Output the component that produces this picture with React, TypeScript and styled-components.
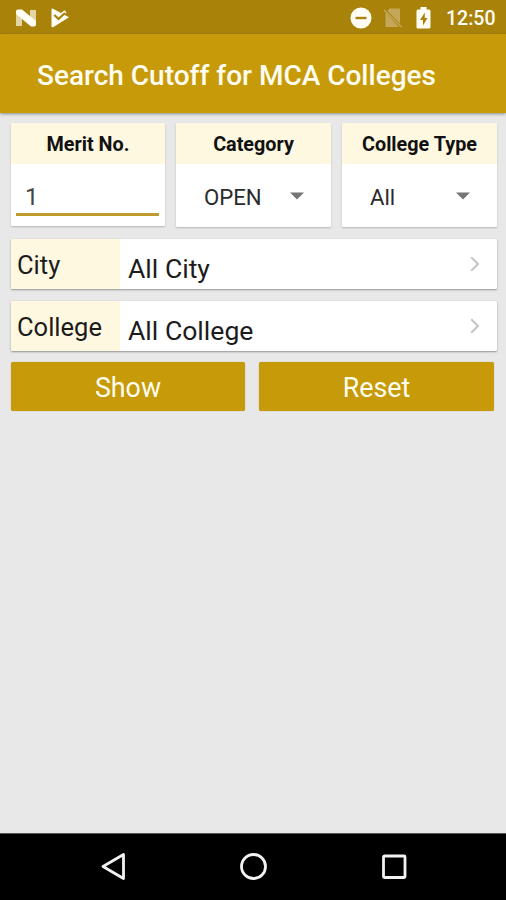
import React from "react";
import styled, { createGlobalStyle } from "styled-components";

const GOLD = "#c79a09";
const CREAM = "#fff8e1";

const GlobalStyle = createGlobalStyle`
  *, *::before, *::after { box-sizing: border-box; }
  body { margin: 0; background: #e8e8e8; }
  button, input { font: inherit; }
`;

const Screen = styled.div`
  width: 506px;
  height: 900px;
  display: flex;
  flex-direction: column;
  overflow: hidden;
  background: #e8e8e8;
  color: #1c1c1c;
  font-family: Roboto, "Liberation Sans", sans-serif;
`;

const StatusBar = styled.header`
  flex: none;
  height: 34px;
  display: flex;
  align-items: center;
  justify-content: space-between;
  padding: 0 11px 0 16px;
  background: #a9820a;
  color: #fffdf5;
`;

const StatusGroup = styled.div<{ $gap: number }>`
  display: flex;
  align-items: center;
  gap: ${(p) => p.$gap}px;
  height: 34px;
  padding-top: 1px;
`;

const Clock = styled.time`
  margin-left: 3px;
  width: 49px;
  font-size: 19.5px;
  font-weight: 500;
  line-height: 34px;
  padding-top: 2px;
  white-space: nowrap;
`;

const AppBar = styled.div`
  flex: none;
  height: 79px;
  padding-left: 37px;
  background: ${GOLD};
  box-shadow: 0 1px 3px rgba(0, 0, 0, 0.4);
`;

const Title = styled.h1`
  margin: 0;
  color: #fffdf0;
  font-size: 28px;
  font-weight: 500;
  line-height: 83px;
  white-space: nowrap;
`;

const Form = styled.main`
  flex: 1;
  padding: 10px 9px 0 11px;
`;

const Filters = styled.section`
  display: grid;
  grid-template-columns: 154px 155px 155px;
  column-gap: 11px;
  align-items: start;
  height: 116px;
`;

const Card = styled.div<{ $height: number }>`
  height: ${(p) => p.$height}px;
  background: #fff;
  border-radius: 1px;
  overflow: hidden;
  box-shadow: 0 1px 2px rgba(0, 0, 0, 0.22);
`;

const CardLabel = styled.div`
  height: 41px;
  background: ${CREAM};
  color: #111;
  font-size: 19.8px;
  font-weight: 700;
  line-height: 43px;
  text-align: center;
  white-space: nowrap;
`;

const MeritInput = styled.input`
  display: block;
  width: 143px;
  height: 52px;
  margin-left: 5px;
  padding: 16px 8px 0 9px;
  border: 0;
  border-bottom: 3px solid #bf9a2c;
  outline: 0;
  background: transparent;
  color: #444;
  font-size: 24px;
`;

const Select = styled.div`
  display: flex;
  align-items: center;
  justify-content: space-between;
  height: 64px;
  padding: 0 27px 0 28px;
  color: #2b2b2b;
  font-size: 22.2px;
`;

const SelectValue = styled.span`
  padding-top: 1px;
`;

const Row = styled.div<{ $gap: number }>`
  display: flex;
  height: 50px;
  margin-bottom: ${(p) => p.$gap}px;
  background: #fff;
  border-radius: 1px;
  box-shadow: 0 1px 2px rgba(0, 0, 0, 0.36), 0 0 1px rgba(0, 0, 0, 0.15);
`;

const RowLabel = styled.div`
  width: 109px;
  padding-left: 6px;
  background: ${CREAM};
  font-size: 25.5px;
  line-height: 53px;
  height: 50px;
  white-space: nowrap;
`;

const RowValue = styled.div`
  flex: 1;
  padding-left: 8px;
  font-size: 26.6px;
  line-height: 59px;
  height: 50px;
  white-space: nowrap;
`;

const RowArrow = styled.svg`
  flex: none;
  width: 10px;
  height: 16px;
  margin: 17px 17px 0 0;
`;

const Actions = styled.div`
  display: grid;
  grid-template-columns: 234px 235px;
  column-gap: 14px;
`;

const ActionButton = styled.button`
  height: 49px;
  padding: 4px 0 0;
  border: 0;
  border-radius: 2px;
  background: ${GOLD};
  color: #fffdf0;
  font-size: 26.8px;
  line-height: 45px;
  box-shadow: 0 0 1px rgba(120, 90, 0, 0.6);
`;

const NavBar = styled.nav`
  flex: none;
  display: grid;
  grid-template-columns: 28px 28px 28px;
  column-gap: 112px;
  padding: 19px 0 0 100px;
  height: 67px;
  border-top: 1px solid #555;
  background: #000;
`;

const Chevron = () => (
  <RowArrow viewBox="0 0 10 16">
    <path d="M1.2 1.2 8 8l-6.8 6.8" fill="none" stroke="#c4c4c4" strokeWidth="2" />
  </RowArrow>
);

const Caret = () => (
  <svg width="14" height="8" viewBox="0 0 14 8">
    <path d="M0 .5h14L7 7.5z" fill="#757575" />
  </svg>
);

const filters = [
  { label: "Category", value: "OPEN" },
  { label: "College Type", value: "All" },
];

const rows = [
  { label: "City", value: "All City", gap: 12 },
  { label: "College", value: "All College", gap: 11 },
];

export default function App() {
  return (
    <>
      <GlobalStyle />
      <Screen>
        <StatusBar>
          <StatusGroup $gap={15}>
            <svg width="20" height="18" viewBox="0 0 20 18">
              <path d="M0 2l6 4v11H0zM20 1v15l-6-4V1z" fill="#e3d5a6" />
              <path d="M0 2.5Q0 .5 2 .5h4L20 12v3.5Q20 17.5 18 17.5h-3L0 5z" fill="#fffdf5" />
            </svg>
            <svg width="19" height="20" viewBox="0 0 19 20">
              <path d="M.5 1.5Q.5 0 2 .7L18 9.3 2.5 19Q.5 20 .5 18z" fill="#fffdf5" />
              <path d="M9 5.8 13.5 2.2 15.5 4.5 11 8.5z" fill="#fffdf5" />
              <path d="M3.3 7l4.2 4L14 5" fill="none" stroke="#a9820a" strokeWidth="2.2" />
            </svg>
          </StatusGroup>
          <StatusGroup $gap={12}>
            <svg width="22" height="22" viewBox="0 0 22 22">
              <circle cx="11" cy="11" r="10.5" fill="#fffdf5" />
              <path d="M5.5 11h11" stroke="#a9820a" strokeWidth="2.4" />
            </svg>
            <svg width="20" height="20" viewBox="0 0 20 20">
              <path d="M5.5.5H15q1 0 1 1v14L3.500 3zM1.500 4.500 15 19H2.500q-1 0-1-1z" fill="#c5a75a" />
              <path d="M0 2l17.500 17" stroke="#c5a75a" strokeWidth="1.6" />
            </svg>
            <svg width="15" height="22" viewBox="0 0 15 22">
              <path d="M4.5 0h6v2.5H13q1.5 0 1.5 1.5v16q0 1.5-1.5 1.5H2Q.5 21.5.5 20V4Q.5 2.5 2 2.5h2.5z" fill="#fffdf5" />
              <path d="M8.8 5.5 4 13h3v5.5l4.5-7.5H8.8z" fill="#a9820a" />
            </svg>
            <Clock>12:50</Clock>
          </StatusGroup>
        </StatusBar>
        <AppBar>
          <Title>Search Cutoff for MCA Colleges</Title>
        </AppBar>
        <Form>
          <Filters>
            <Card $height={103}>
              <CardLabel>Merit No.</CardLabel>
              <MeritInput defaultValue="1" aria-label="Merit No." />
            </Card>
            {filters.map((f) => (
              <Card key={f.label} $height={104}>
                <CardLabel>{f.label}</CardLabel>
                <Select>
                  <SelectValue>{f.value}</SelectValue>
                  <Caret />
                </Select>
              </Card>
            ))}
          </Filters>
          {rows.map((r) => (
            <Row key={r.label} $gap={r.gap}>
              <RowLabel>{r.label}</RowLabel>
              <RowValue>{r.value}</RowValue>
              <Chevron />
            </Row>
          ))}
          <Actions>
            <ActionButton>Show</ActionButton>
            <ActionButton>Reset</ActionButton>
          </Actions>
        </Form>
        <NavBar>
          <svg width="28" height="28" viewBox="0 0 28 28">
            <path d="M3 13.5 23.5 1.5v24z" fill="none" stroke="#f2f2f2" strokeWidth="2.8" strokeLinejoin="round" />
          </svg>
          <svg width="28" height="28" viewBox="0 0 28 28">
            <circle cx="13.5" cy="13.5" r="12" fill="none" stroke="#f2f2f2" strokeWidth="2.8" />
          </svg>
          <svg width="28" height="28" viewBox="0 0 28 28">
            <rect x="3.5" y="3" width="21.5" height="21.5" rx="1" fill="none" stroke="#f2f2f2" strokeWidth="2.8" />
          </svg>
        </NavBar>
      </Screen>
    </>
  );
}
